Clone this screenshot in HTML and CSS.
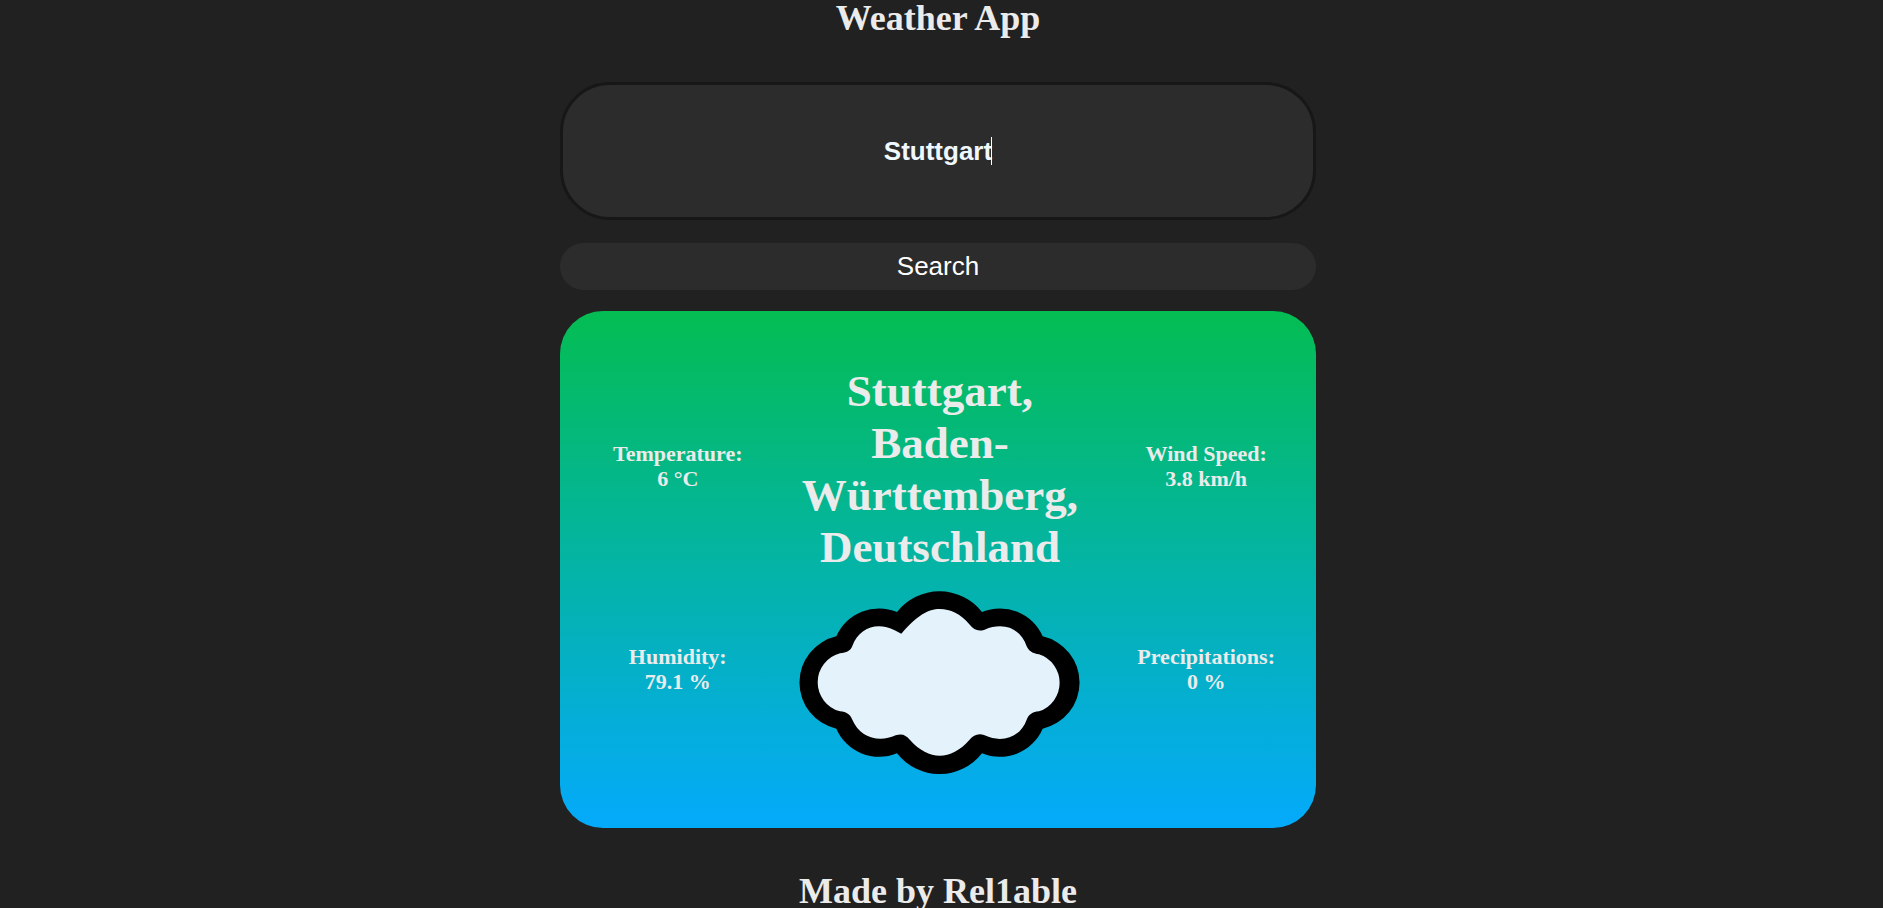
FILE: index.html
```html
<!DOCTYPE html>
<html lang="en">
<head>
<meta charset="utf-8">
<title>Weather App</title>
<link rel="stylesheet" href="styles.css">
</head>
<body>
<main class="app">
  <h1 class="title">Weather App</h1>
  <form class="search">
    <div class="field">
      <input class="city-input" type="text" value="Stuttgart" aria-label="City">
      <span class="caret"></span>
    </div>
    <button class="search-button" type="button">Search</button>
  </form>
  <section class="card">
    <div class="stats">
      <p class="stat">Temperature:<br>6 °C</p>
      <p class="stat">Humidity:<br>79.1 %</p>
    </div>
    <div class="place">
      <h2 class="place-name">Stuttgart,<br>Baden-<br>Württemberg,<br>Deutschland</h2>
      <svg class="cloud" viewBox="0 0 843 549" role="img" aria-label="Cloudy">
        <path d="M294 63A162 162 0 0 1 549 63A140 140 0 0 1 731 136A142 142 0 0 1 731 413A140 140 0 0 1 549 487A162 162 0 0 1 294 487A140 140 0 0 1 112 413A142 142 0 0 1 112 136A140 140 0 0 1 294 63Z"/>
        <path fill="#e4f2fb" d="M307 128C353 74 388 54 422 54C454 54 485 68 511 100C525 118 538 122 557 116C612 93 664 110 683 166C690 180 701 188 720 190A90 90 0 0 1 720 361C700 363 690 370 683 386C664 440 608 457 557 433C538 426 524 432 511 447C455 510 390 510 333 447C320 432 310 427 290 433C238 457 182 438 160 386C153 370 143 363 123 361A90 90 0 0 1 123 187C143 185 154 180 160 165C182 108 236 92 287 118Z"/>
      </svg>
    </div>
    <div class="stats">
      <p class="stat">Wind Speed:<br>3.8 km/h</p>
      <p class="stat">Precipitations:<br>0 %</p>
    </div>
  </section>
  <footer class="credit">Made by Rel1able</footer>
</main>
</body>
</html>
```
FILE: styles.css
```css
* {
  box-sizing: border-box;
}

body {
  margin: 0;
  padding: 2px 7px 0 0;
  height: 100vh;
  overflow: hidden;
  display: flex;
  align-items: center;
  justify-content: center;
  background: #212121;
  color: #ebebeb;
  font-family: "Liberation Serif", "Times New Roman", serif;
}

.app {
  width: 756px;
  max-width: 100%;
  flex: none;
}

.title,
.credit {
  margin: 0;
  font-size: 36px;
  font-weight: bold;
  line-height: 41px;
  text-align: center;
}

.search {
  display: flex;
  flex-direction: column;
  gap: 23px;
  margin: 43px 0 21px;
}

.field {
  position: relative;
}

.city-input,
.search-button {
  display: block;
  width: 100%;
  background: #2c2c2c;
  font-family: "Liberation Sans", Arial, sans-serif;
  font-size: 26px;
  text-align: center;
}

.city-input {
  height: 138px;
  padding: 0 16px;
  border: 3px solid #171717;
  border-radius: 50px;
  outline: none;
  color: #f0f8ff;
  font-weight: bold;
}

.caret {
  position: absolute;
  top: 55px;
  left: calc(50% + 53px);
  width: 1px;
  height: 28px;
  background: #fff;
}

.search-button {
  height: 47px;
  padding: 0;
  border: 0;
  border-radius: 24px;
  color: #fff;
}

.card {
  display: flex;
  justify-content: space-between;
  padding: 54px 41px 54px 53px;
  border-radius: 43px;
  background: linear-gradient(#04bd52, #04aafb);
}

.stats {
  display: flex;
  flex-direction: column;
  justify-content: space-around;
  padding-bottom: 4px;
}

.stat {
  margin: 0;
  font-size: 22px;
  font-weight: bold;
  line-height: 25px;
  text-align: center;
}

.place {
  display: flex;
  flex-direction: column;
  align-items: center;
  gap: 18px;
}

.place-name {
  margin: 0;
  font-size: 45px;
  line-height: 52px;
  text-align: center;
}

.cloud {
  width: 281px;
  height: 183px;
}

.credit {
  margin-top: 43px;
}
```
